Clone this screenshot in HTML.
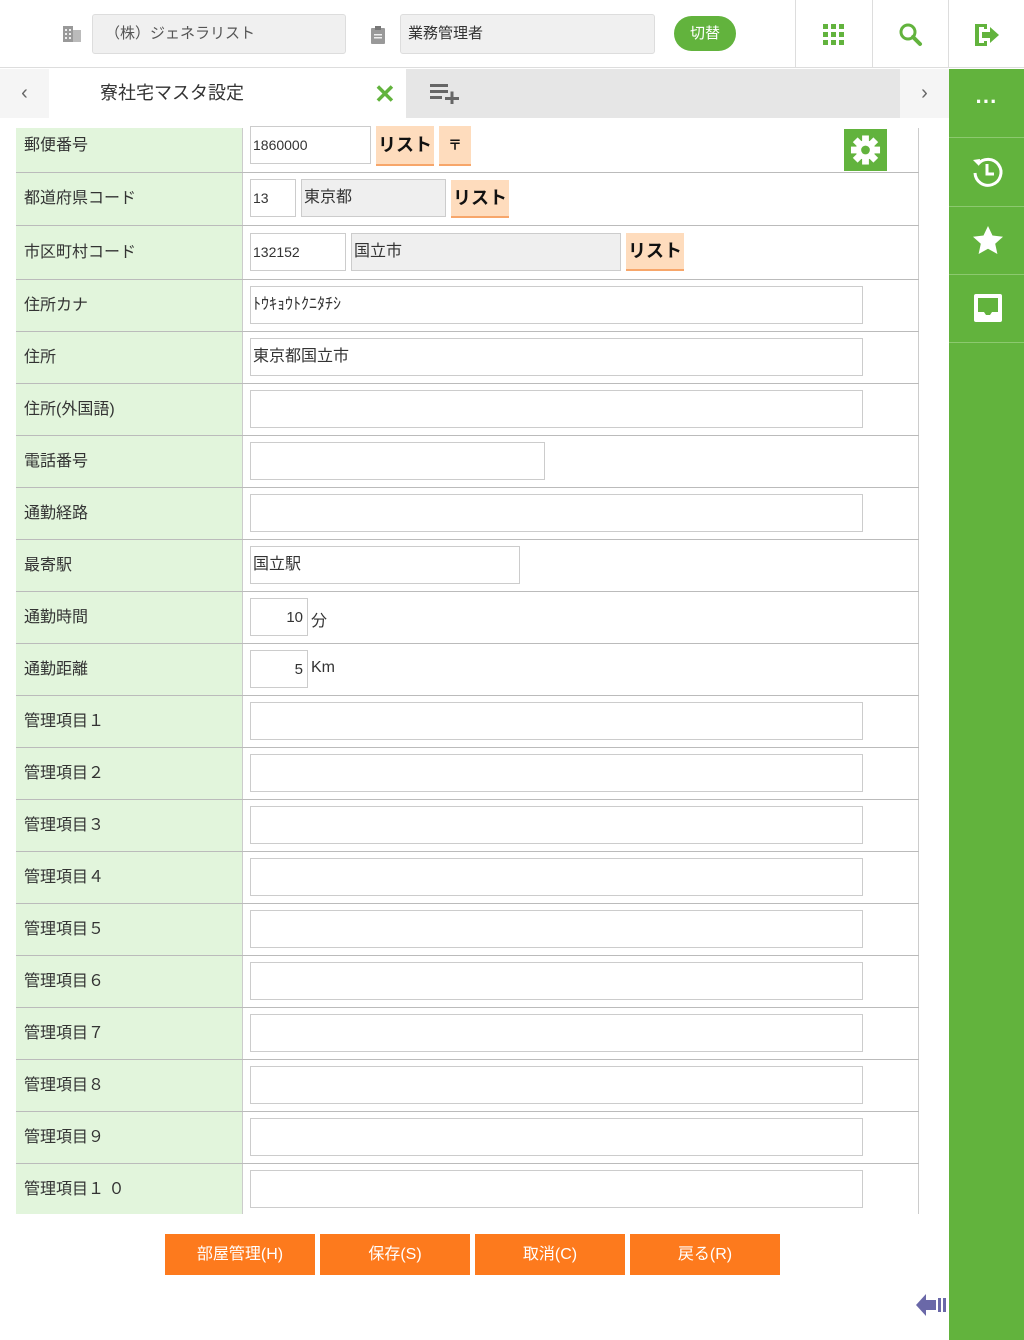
<!DOCTYPE html>
<html><head><meta charset="utf-8"><style>
*{box-sizing:border-box;margin:0;padding:0}
body{width:1024px;height:1340px;position:relative;background:#fff;font-family:"Liberation Sans","Noto Sans CJK JP",sans-serif;color:#333;overflow:hidden}
.a{position:absolute}
.in{position:absolute;border:1px solid #ccc;background:#fff;font-size:14px;padding-left:2px;line-height:36px;height:38px}
.lab{position:absolute;left:16px;width:227px;background:#e2f5dc;font-size:16px;padding-left:8px;border-right:1px solid #ccc}
.row{position:absolute;left:16px;width:903px;border-bottom:1px solid #bbb}
.lb{position:absolute;background:#fedcbd;border-bottom:2px solid #f7a66a;font-weight:bold;font-size:18px;text-align:center;color:#111}
.btn{position:absolute;top:1234px;height:41px;width:150px;background:#fd7a1d;color:#fff;font-size:16px;text-align:center;line-height:41px}
.sb{position:absolute;left:949px;width:75px;border-bottom:1px solid #8cc96f}
</style></head><body>
<div class="a" style="left:0;top:0;width:1024px;height:68px;border-bottom:1px solid #ddd;background:#fff"></div>
<svg class="a" style="left:62px;top:24px" width="20" height="20"><rect x="1" y="2" width="10" height="16" fill="#999"/><rect x="11" y="6" width="8" height="12" fill="#bbb"/><g fill="#eee"><rect x="3" y="5" width="2" height="2"/><rect x="7" y="5" width="2" height="2"/><rect x="3" y="9" width="2" height="2"/><rect x="7" y="9" width="2" height="2"/><rect x="3" y="13" width="2" height="2"/><rect x="7" y="13" width="2" height="2"/></g></svg>
<div class="a" style="left:92px;top:14px;width:254px;height:40px;background:#f0f0f0;border:1px solid #ddd;border-radius:3px;font-size:15px;line-height:38px;padding-left:12px;color:#555">（株）ジェネラリスト</div>
<svg class="a" style="left:370px;top:25px" width="16" height="19"><rect x="1" y="3" width="14" height="16" rx="1" fill="#999"/><rect x="5" y="1" width="6" height="4" fill="#777"/><rect x="4" y="9" width="8" height="1.5" fill="#eee"/><rect x="4" y="12" width="8" height="1.5" fill="#eee"/></svg>
<div class="a" style="left:400px;top:14px;width:255px;height:40px;background:#f0f0f0;border:1px solid #ddd;border-radius:3px;font-size:15px;line-height:38px;padding-left:7px;color:#333">業務管理者</div>
<div class="a" style="left:674px;top:16px;width:62px;height:35px;background:#62b33d;border-radius:18px;color:#fff;font-size:15px;text-align:center;line-height:35px">切替</div>
<div class="a" style="left:795px;top:0;width:1px;height:68px;background:#ddd"></div>
<div class="a" style="left:872px;top:0;width:1px;height:68px;background:#ddd"></div>
<div class="a" style="left:948px;top:0;width:1px;height:68px;background:#ddd"></div>
<svg class="a" style="left:823px;top:24px" width="22" height="22" fill="#62b33d"><rect x="0" y="0" width="5" height="5"/><rect x="8" y="0" width="5" height="5"/><rect x="16" y="0" width="5" height="5"/><rect x="0" y="8" width="5" height="5"/><rect x="8" y="8" width="5" height="5"/><rect x="16" y="8" width="5" height="5"/><rect x="0" y="16" width="5" height="5"/><rect x="8" y="16" width="5" height="5"/><rect x="16" y="16" width="5" height="5"/></svg>
<svg class="a" style="left:898px;top:22px" width="26" height="26"><circle cx="10" cy="10" r="7" stroke="#62b33d" stroke-width="3" fill="none"/><path d="M15 15 L22 22" stroke="#62b33d" stroke-width="4" stroke-linecap="round"/></svg>
<svg class="a" style="left:973px;top:22px" width="28" height="26"><path d="M2 2h12v5h-3v-2H6v16h5v-2h3v5H2z" fill="#62b33d"/><path d="M9 10h8V5l9 8-9 8v-5H9z" fill="#62b33d"/></svg>
<div class="a" style="left:0;top:69px;width:949px;height:49px;background:#e6e6e6"></div>
<div class="a" style="left:0;top:69px;width:49px;height:49px;background:#f5f5f5;font-size:20px;line-height:49px;text-align:center;color:#666">&#8249;</div>
<div class="a" style="left:49px;top:69px;width:357px;height:49px;background:#fff;font-size:18px;line-height:49px;padding-left:51px">寮社宅マスタ設定</div>
<div class="a" style="left:374px;top:79px;font-size:26px;font-weight:bold;color:#62b33d;line-height:30px">✕</div>
<svg class="a" style="left:430px;top:84px" width="30" height="20" fill="#666"><rect x="0" y="0" width="18" height="3"/><rect x="0" y="6" width="18" height="3"/><rect x="0" y="12" width="12" height="3"/><rect x="15" y="13" width="14" height="3"/><rect x="20.5" y="7.5" width="3" height="14"/></svg>
<div class="a" style="left:900px;top:69px;width:49px;height:49px;background:#f5f5f5;font-size:20px;line-height:49px;text-align:center;color:#666">&#8250;</div>
<div class="a" style="left:949px;top:69px;width:75px;height:1271px;background:#62b33d"></div>
<div class="sb" style="top:69px;height:69px;color:#fff;font-size:22px;font-weight:bold;text-align:center;line-height:66px">···</div>
<div class="sb" style="top:138px;height:69px"></div>
<div class="sb" style="top:207px;height:68px"></div>
<div class="sb" style="top:275px;height:68px"></div>
<svg class="a" style="left:970px;top:154px" width="36" height="36"><path d="M8 10 A13 13 0 1 1 5 19" stroke="#fff" stroke-width="3" fill="none"/><path d="M3 6 L10 5 L9 12 Z" fill="#fff"/><path d="M17 10v10h7" stroke="#fff" stroke-width="3" fill="none"/></svg>
<svg class="a" style="left:972px;top:225px" width="32" height="30"><path d="M16 1l4.5 9.5 10.5 1.2-7.8 7 2.2 10.3L16 23.8 6.6 29l2.2-10.3L1 11.7l10.5-1.2z" fill="#fff"/></svg>
<svg class="a" style="left:972px;top:292px" width="32" height="32"><path d="M4 2h24a2 2 0 0 1 2 2v24a2 2 0 0 1-2 2H4a2 2 0 0 1-2-2V4a2 2 0 0 1 2-2z" fill="#fff"/><path d="M6 6h20v14h-6l-2 3h-4l-2-3H6z" fill="#62b33d"/></svg>
<div class="a" style="left:16px;top:128px;width:903px;height:1087px;border-right:1px solid #ccc"></div>
<div class="lab" style="top:128px;height:1087px;"></div>
<div class="row" style="top:128px;height:45px"></div>
<div class="lab" style="top:128px;height:44px;line-height:36px;background:none;border:0">郵便番号</div>
<div class="in" style="left:250px;top:126px;width:121px;height:38px">1860000</div>
<div class="lb" style="left:376px;top:126px;width:58px;height:40px;line-height:38px">リスト</div>
<div class="lb" style="left:439px;top:126px;width:32px;height:40px;line-height:38px;font-size:14px">〒</div>
<div class="a" style="left:844px;top:129px;width:43px;height:42px;background:#62b33d"></div>
<svg class="a" style="left:850px;top:134px" width="31" height="32" viewBox="-16 -16 32 32"><g fill="#fff"><circle r="10"/><rect x="-3.5" y="-15" width="7" height="30"/><rect x="-3.5" y="-15" width="7" height="30" transform="rotate(45)"/><rect x="-3.5" y="-15" width="7" height="30" transform="rotate(90)"/><rect x="-3.5" y="-15" width="7" height="30" transform="rotate(135)"/></g><circle r="4.5" fill="#62b33d"/></svg>
<div class="row" style="top:172px;height:54px"></div>
<div class="lab" style="top:172px;height:53px;line-height:54px;background:none;border:0">都道府県コード</div>
<div class="in" style="left:250px;top:179px;width:46px">13</div>
<div class="in" style="left:301px;top:179px;width:145px;background:#efefef;font-size:16px">東京都</div>
<div class="lb" style="left:451px;top:180px;width:58px;height:38px;line-height:36px">リスト</div>
<div class="row" style="top:225px;height:55px"></div>
<div class="lab" style="top:225px;height:54px;line-height:56px;background:none;border:0">市区町村コード</div>
<div class="in" style="left:250px;top:233px;width:96px">132152</div>
<div class="in" style="left:351px;top:233px;width:270px;background:#efefef;font-size:16px">国立市</div>
<div class="lb" style="left:626px;top:233px;width:58px;height:38px;line-height:36px">リスト</div>
<div id="rows"></div>
<script>
var L=[["住所カナ",279,"ﾄｳｷｮｳﾄｸﾆﾀﾁｼ",613],["住所",331,"東京都国立市",613],["住所(外国語)",383,"",613],["電話番号",435,"",295],["通勤経路",487,"",613],["最寄駅",539,"国立駅",270],["通勤時間",591,"#10|分",0],["通勤距離",643,"#5|Km",0]];
for(var i=1;i<=10;i++)L.push(["管理項目"+(i<10?String.fromCharCode(0xFF10+i):"１ ０"),695+(i-1)*52,"",613]);
var h="";
L.forEach(function(r){var t=r[1];
h+='<div class="row" style="top:'+t+'px;height:53px"></div>';
h+='<div class="lab" style="top:'+t+'px;height:52px;line-height:54px;background:none;border:0">'+r[0]+'</div>';
if(r[2][0]=="#"){var p=r[2].slice(1).split("|");
h+='<div class="in" style="left:250px;top:'+(t+7)+'px;width:58px;text-align:right;padding-right:4px;font-size:15px;line-height:38px">'+p[0]+'</div><div class="a" style="left:311px;top:'+(t+16)+'px;font-size:16px">'+p[1]+'</div>';}
else h+='<div class="in" style="left:250px;top:'+(t+7)+'px;width:'+r[3]+'px;font-size:16px">'+r[2]+'</div>';});
document.getElementById("rows").innerHTML=h;
</script>
<div class="a" style="left:16px;top:1214px;width:904px;height:2px;background:#fff"></div>
<div class="btn" style="left:165px">部屋管理(H)</div>
<div class="btn" style="left:320px">保存(S)</div>
<div class="btn" style="left:475px">取消(C)</div>
<div class="btn" style="left:630px">戻る(R)</div>
<svg class="a" style="left:916px;top:1292px" width="33" height="26"><path d="M0 13 L10 2 V8 H20 V18 H10 V24 Z" fill="#6a68a8"/><rect x="22" y="6" width="3" height="14" fill="#6a68a8"/><rect x="27" y="6" width="3" height="14" fill="#6a68a8"/></svg>
</body></html>
